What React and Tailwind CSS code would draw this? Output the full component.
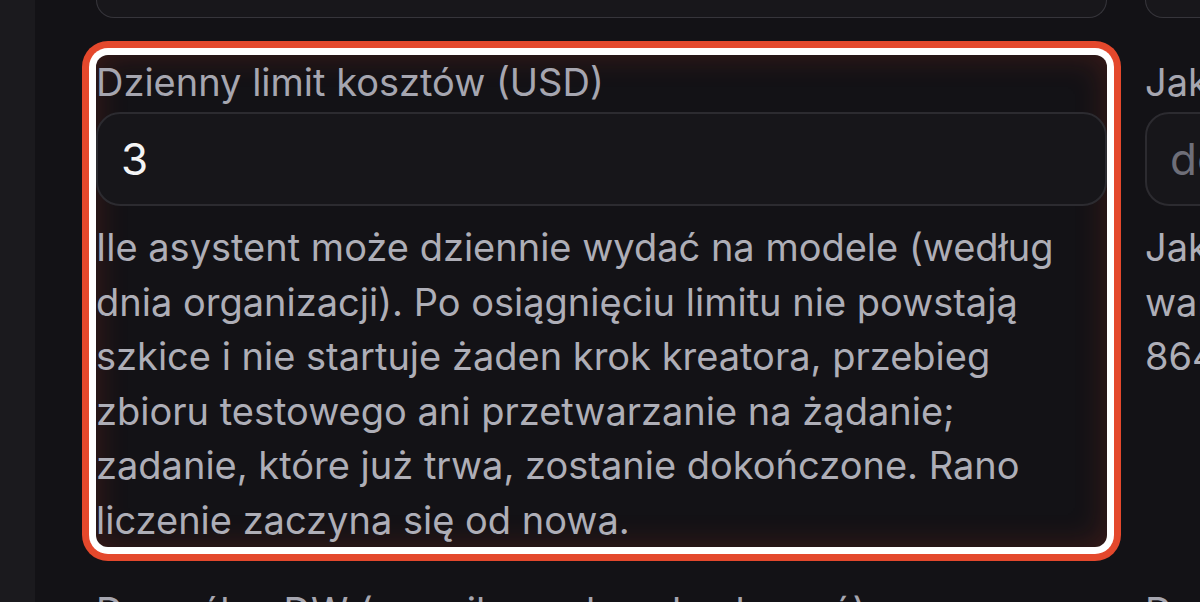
export default function App() {
  const font = { fontFamily: "Inter, 'Noto Sans', sans-serif" };
  return (
    <div
      className="w-[1200px] h-[602px] overflow-hidden bg-[#131216] flex"
      style={font}
    >
      <div className="w-[35px] shrink-0 bg-[#1b1a1e]" />
      <div className="flex-1 pl-[61px] overflow-hidden">
        <div className="grid grid-cols-[1011px_1011px] gap-x-[38px] gap-y-[37px] w-[2060px]">
          {/* previous row (cut off) */}
          <div className="h-[18px] rounded-b-[24px] border border-t-0 border-[#36353b] bg-[#18171b]" />
          <div className="h-[18px] rounded-b-[24px] border border-t-0 border-[#36353b] bg-[#18171b]" />

          {/* highlighted field */}
          <div className="rounded-[12px] shadow-[0_0_0_7px_#ffffff,0_0_0_14px_#e4482c,inset_0_0_32px_rgba(200,60,35,0.24)] bg-[#131216]">
            <div className="text-[38px] leading-[55px] text-[#a6a6b0]">
              Dzienny limit kosztów (USD)
            </div>
            <div className="mt-[2px] h-[94px] rounded-[24px] border-[2px] border-[#2c2b30] bg-[#17161a] flex items-center px-[23px]">
              <span className="text-[44px] text-[#f4f4f5]">3</span>
            </div>
            <p className="mt-[14px] text-[38px] leading-[54.5px] text-[#aeaeb7]">
              Ile asystent może dziennie wydać na modele (według dnia organizacji). Po osiągnięciu limitu nie powstają szkice i nie startuje żaden krok kreatora, przebieg zbioru testowego ani przetwarzanie na żądanie; zadanie, które już trwa, zostanie dokończone. Rano liczenie zaczyna się od nowa.
            </p>
          </div>

          {/* right field */}
          <div>
            <div className="text-[38px] leading-[55px] text-[#a6a6b0] whitespace-nowrap">
              Jak długo przechowywać szkice (sekundy)
            </div>
            <div className="mt-[2px] h-[94px] rounded-[24px] border-[2px] border-[#2c2b30] bg-[#17161a] flex items-center px-[23px]">
              <span className="text-[44px] text-[#6e6e78]">domyślnie 86400</span>
            </div>
            <p className="mt-[14px] text-[38px] leading-[54.5px] text-[#aeaeb7] whitespace-nowrap">
              Jak długo szkic czeka na zatwierdzenie, zanim wygaśnie. Pusta
              <br />
              wartość oznacza ustawienie domyślne, czyli
              <br />
              86400 sekund (24 godziny).
            </p>
          </div>

          {/* next row (cut off) */}
          <div className="text-[38px] leading-[55px] text-[#a6a6b0] whitespace-nowrap">
            Domyślny DW (e-mail oraz kanał zgłoszeń)
          </div>
          <div className="text-[38px] leading-[55px] text-[#a6a6b0] whitespace-nowrap">
            Domyślny adres odpowiedzi
          </div>
        </div>
      </div>
    </div>
  );
}
